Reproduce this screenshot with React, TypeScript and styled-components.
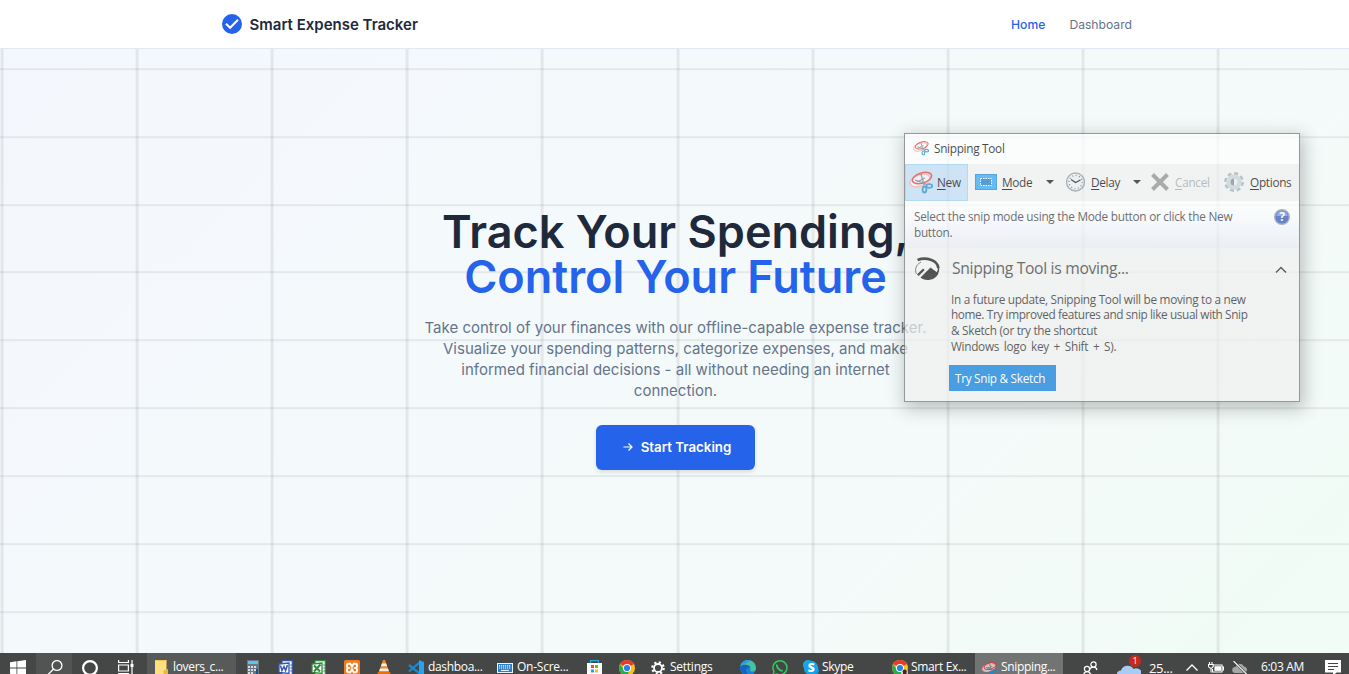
import React from "react";
import styled, { createGlobalStyle } from "styled-components";

const Global = createGlobalStyle`
  * { box-sizing: border-box; }
  html, body { margin: 0; padding: 0; }
  body { font-family: Inter, sans-serif; overflow: hidden; }
  h1, p { margin: 0; }
  svg { display: block; flex: none; }
`;

const Screen = styled.div`
  position: relative;
  display: flex;
  flex-direction: column;
  width: 1349px;
  height: 674px;
  overflow: hidden;
`;

const Page = styled.div`
  flex: 1;
  min-height: 0;
  display: flex;
  flex-direction: column;
  background:
    repeating-linear-gradient(90deg, rgba(110, 110, 120, 0.13) 0 3px, transparent 3px 135.1px) 0.6px 0,
    repeating-linear-gradient(180deg, rgba(110, 110, 120, 0.12) 0 2px, transparent 2px 67.87px) 0 0.2px,
    linear-gradient(135deg, #f4f7fd 0%, #f4f9fc 30%, #f4fafa 65%, #f2fbf7 88%, #f0fcf5 100%);
`;

const Header = styled.header`
  height: 49px;
  flex: none;
  display: flex;
  align-items: center;
  justify-content: space-between;
  padding: 0 217px 0 222px;
  background: rgba(255, 255, 255, 0.97);
  border-bottom: 1px solid #e2e8f0;
`;

const Brand = styled.div`
  display: flex;
  align-items: center;
  gap: 7.5px;
  color: #1e293b;
  font-size: 15px;
  font-weight: 600;
  white-space: nowrap;
`;

const Nav = styled.nav`
  display: flex;
  gap: 24px;
  font-size: 12.15px;
`;

const NavLink = styled.span<{ $active?: boolean }>`
  color: ${(p) => (p.$active ? "#2563eb" : "#64748b")};
  font-weight: ${(p) => (p.$active ? 500 : 400)};
`;

const Hero = styled.main`
  flex: 1;
  display: flex;
  flex-direction: column;
  align-items: center;
  padding: 160px 0 0 2px;
  text-align: center;
`;

const Headline = styled.h1`
  font-size: 45px;
  line-height: 45px;
  font-weight: 600;
  color: #1e293b;
  white-space: nowrap;
`;

const Accent = styled.span`
  display: block;
  color: #2563eb;
`;

const Lead = styled.p`
  margin-top: 18px;
  font-size: 15px;
  line-height: 21px;
  color: #64748b;
  white-space: nowrap;
`;

const CallToAction = styled.button`
  margin-top: 24px;
  width: 159px;
  height: 45px;
  border: 0;
  border-radius: 6px;
  display: flex;
  align-items: center;
  justify-content: center;
  gap: 8px;
  padding: 0 0 1px 3px;
  background: #2563eb;
  color: #fff;
  font: 600 13.3px Inter, sans-serif;
  box-shadow: 0 2px 4px rgba(0, 0, 0, 0.12);
  white-space: nowrap;
`;

/* Snipping Tool window */

const Window = styled.section`
  position: absolute;
  left: 904px;
  top: 132.5px;
  width: 396px;
  height: 269.5px;
  display: flex;
  flex-direction: column;
  border: 1px solid #6b7170;
  background: #f0f0f0;
  opacity: 0.7;
  box-shadow: 2px 5px 16px 2px rgba(0, 0, 0, 0.33);
  color: #000;
  font-family: "Open Sans", sans-serif;
  font-size: 11.8px;
  letter-spacing: -0.3px;
  white-space: nowrap;
`;

const TitleBar = styled.div`
  height: 30px;
  flex: none;
  display: flex;
  align-items: center;
  gap: 5px;
  padding: 0 0 2px 8px;
  background: #fff;
`;

const ToolBar = styled.div`
  height: 37px;
  flex: none;
  display: flex;
  align-items: center;
`;

const Tool = styled.div<{ $width: number; $gap?: number; $active?: boolean; $disabled?: boolean }>`
  width: ${(p) => p.$width}px;
  height: 37px;
  display: flex;
  align-items: center;
  gap: ${(p) => p.$gap ?? 4}px;
  padding-left: 4px;
  color: ${(p) => (p.$disabled ? "#a0a0a0" : "#000")};
  background: ${(p) => (p.$active ? "#bfdcf3" : "transparent")};
  box-shadow: ${(p) => (p.$active ? "inset 0 0 0 1px #9accf3" : "none")};
  u { text-underline-offset: 2px; }
`;

const Caret = styled.i`
  margin-left: auto;
  margin-right: 5px;
  border: 4px solid transparent;
  border-top-color: #111;
  border-bottom-width: 0;
`;

const Hint = styled.div`
  height: 47px;
  flex: none;
  display: flex;
  justify-content: space-between;
  align-items: flex-start;
  padding: 8.5px 9px 0 9px;
  line-height: 15.5px;
  color: #333;
  background: linear-gradient(#fff 10%, #f9f9fd 40%, #e7e9f2);
`;

const Notice = styled.div`
  flex: 1;
  display: flex;
  padding: 9.500px 11px 0 9px;
`;

const NoticeBody = styled.div`
  flex: 1;
  display: flex;
  flex-direction: column;
  align-items: flex-start;
  padding-left: 11px;
`;

const NoticeTitle = styled.div`
  font-size: 15.7px;
  line-height: 22px;
  letter-spacing: -0.32px;
  color: #333;
  padding-left: 1px;
`;

const NoticeText = styled.p`
  margin-top: 12.5px;
  line-height: 15.8px;
  color: #222;
`;

const TextLine = styled.span<{ $spacing?: number; $word?: number }>`
  display: block;
  letter-spacing: ${(p) => p.$spacing ?? -0.3}px;
  word-spacing: ${(p) => p.$word ?? 0}px;
`;

const TryButton = styled.div`
  margin: 10.500px 0 0 -2px;
  width: 107px;
  height: 26px;
  display: flex;
  align-items: center;
  padding: 0 0 1px 6px;
  background: #0078d7;
  color: #fff;
`;

/* Taskbar */

const TaskBar = styled.footer`
  height: 21px;
  flex: none;
  overflow: hidden;
  background: #454746;
  color: #fff;
  font-family: "Open Sans", sans-serif;
  font-size: 12px;
`;

const TaskRow = styled.div`
  height: 30px;
  display: flex;
`;

const Task = styled.div<{ $width: number; $pad?: number; $gap?: number; $bg?: string; $spacing?: number }>`
  width: ${(p) => p.$width}px;
  height: 30px;
  flex: none;
  display: flex;
  align-items: center;
  gap: ${(p) => p.$gap ?? 4}px;
  padding-left: ${(p) => p.$pad ?? 0}px;
  background: ${(p) => p.$bg ?? "transparent"};
  letter-spacing: ${(p) => p.$spacing ?? -0.33}px;
  white-space: nowrap;
`;

const Label = styled.span`
  line-height: 16px;
  padding-bottom: 2px;
`;

const Weather = styled.div`
  position: relative;
  padding-top: 9px;
`;

const Badge = styled.span`
  position: absolute;
  left: 12px;
  top: -1px;
  width: 12px;
  height: 12px;
  border-radius: 50%;
  background: #c42b1c;
  font-size: 9px;
  line-height: 12px;
  text-align: center;
`;

const Temperature = styled.span`
  line-height: 16px;
  font-size: 13px;
`;

const SnipIcon = ({ size }: { size: number }) => (
  <svg width={size} height={size} viewBox="0 0 24 24" fill="none">
    <ellipse cx="11" cy="10.500" rx="10.500" ry="5.600" transform="rotate(-20 11 10.500)" stroke="#f3a9a9" strokeWidth="1.600" fill="#fff" fillOpacity=".6" />
    <ellipse cx="13" cy="8" rx="10" ry="5" transform="rotate(-18 13 8)" stroke="#e0393e" strokeWidth="1.500" />
    <path d="M12 4l3 11M6 10l11 4M8 12l8-4" stroke="#777" strokeWidth="1.300" />
    <ellipse cx="15.500" cy="19.500" rx="1.900" ry="3" stroke="#1e88c9" strokeWidth="1.800" />
    <ellipse cx="20.300" cy="16" rx="3" ry="1.900" stroke="#1e88c9" strokeWidth="1.800" />
  </svg>
);

const ChromeIcon = ({ profile }: { profile?: boolean }) => (
  <svg width="16" height="16" viewBox="0 0 16 16">
    <circle cx="8" cy="8" r="8" fill="#fbc116" />
    <path d="M8 8L1.100 4A8 8 0 0 1 14.900 4Z" fill="#e33b2e" />
    <path d="M1.100 4A8 8 0 0 0 8 16L11 9.800 5 10Z" fill="#2da94f" />
    <circle cx="8" cy="8" r="4" fill="#fff" />
    <circle cx="8" cy="8" r="3.100" fill="#2f7de9" />
    {profile && <circle cx="12.500" cy="12.500" r="3.500" fill="#d9cfc8" />}
    {profile && <path d="M11 16v-3.500a2 2 0 1 1 3.500 0V16z" fill="#4b1f1a" />}
  </svg>
);

const DocIcon = ({ color, children }: { color: string; children: React.ReactNode }) => (
  <svg width="16" height="16" viewBox="0 0 16 16" fill="none">
    <path d="M4 .7h10.300v14.600H4z" fill="#f5f8ff" stroke={color} strokeWidth="1.200" />
    <path d="M12.300 5h1.500M12.300 8h1.500M12.300 11h1.500" stroke={color} />
    <path d="M1 4l10-1v10.500L1 12.500z" fill="#fff" stroke={color} strokeWidth="1.300" />
    {children}
  </svg>
);

function SnippingTool() {
  return (
    <Window>
      <TitleBar>
        <SnipIcon size={16} />
        <span>Snipping Tool</span>
      </TitleBar>
      <ToolBar>
        <Tool $width={63} $active $gap={4}>
          <SnipIcon size={24} />
          <span><u>N</u>ew</span>
        </Tool>
        <Tool $width={91} $gap={4}>
          <svg width="26" height="16" viewBox="0 0 26 16">
            <path d="M3 0h22v16H3z" fill="#1783cc" />
            <path d="M4 1h20v14H4z" fill="#29a3f2" />
            <path d="M8.500 4.500h11v7h-11z" fill="#1677c4" stroke="#fff" strokeDasharray="1.500 1" />
          </svg>
          <span><u>M</u>ode</span>
          <Caret />
        </Tool>
        <Tool $width={87} $gap={6}>
          <svg width="22" height="20" viewBox="0 0 22 20" fill="none">
            <circle cx="12.500" cy="10" r="9" fill="#e9edef" stroke="#8b969c" strokeWidth="1.400" />
            <circle cx="12.500" cy="10" r="6.600" stroke="#59666d" strokeWidth="1.300" strokeDasharray="1 2.450" />
            <path d="M8 7.500L12.500 10.500 17.500 8" stroke="#111" strokeWidth="1.300" />
          </svg>
          <span><u>D</u>elay</span>
          <Caret />
        </Tool>
        <Tool $width={74} $gap={5}  $disabled>
          <svg width="20" height="20" viewBox="0 0 20 20">
            <path d="M2.500 2.500l15 15M17.500 2.500L2.500 17.500" stroke="#8a8a8a" strokeWidth="4" />
          </svg>
          <span><u>C</u>ancel</span>
        </Tool>
        <Tool $width={79} $gap={5}>
          <svg width="21" height="24" viewBox="0 0 21 24" fill="none">
            <circle cx="10" cy="12" r="8.400" stroke="#9aa9b2" strokeWidth="3" strokeDasharray="3.800 2.800" />
            <circle cx="10" cy="12" r="5.600" fill="#e8eef1" stroke="#c3cfd6" strokeWidth="4.500" />
            <path d="M10 8.500a3.500 3.500 0 0 0 0 7z" fill="#76848c" />
          </svg>
          <span><u>O</u>ptions</span>
        </Tool>
      </ToolBar>
      <Hint>
        <span>
          <TextLine $spacing={-0.26}>Select the snip mode using the Mode button or click the New</TextLine>
          <TextLine>button.</TextLine>
        </span>
        <svg width="16" height="16" viewBox="0 0 16 16">
          <circle cx="8" cy="8" r="7.300" fill="#2a50b8" stroke="#8795ac" strokeWidth="1.400" />
          <path d="M2.200 7a5.900 5.900 0 0 1 11.600 0z" fill="#6d8fdc" />
          <text x="8" y="12.200" textAnchor="middle" fontSize="11.500" fontWeight="700" fill="#fff">?</text>
        </svg>
      </Hint>
      <Notice>
        <svg width="26" height="24" viewBox="0 0 26 24" fill="none">
          <path d="M3.500 3C12-.3 23.500 3 24.300 11" stroke="#111" strokeWidth="2.600" />
          <path d="M24.600 10c.4 5-2.500 9-7 11" stroke="#111" strokeWidth="1.400" />
          <path d="M7 5C1.500 8 .5 13 2.500 17" stroke="#555" strokeWidth="1" />
          <path d="M6.500 20.500L16.500 10.500 24.500 16.500C22 21 18 23 13.500 23 10.500 23 8 22 6.500 20.500z" fill="#111" />
          <path d="M3 17.500L9 11.500 10.700 13 4.700 19z" fill="#111" />
        </svg>
        <NoticeBody>
          <NoticeTitle>Snipping Tool is moving...</NoticeTitle>
          <NoticeText>
            <TextLine $spacing={-0.3}>In a future update, Snipping Tool will be moving to a new</TextLine>
            <TextLine $spacing={-0.38}>home. Try improved features and snip like usual with Snip</TextLine>
            <TextLine>&amp; Sketch (or try the shortcut</TextLine>
            <TextLine $word={2}>Windows logo key + Shift + S).</TextLine>
          </NoticeText>
          <TryButton>Try Snip &amp; Sketch</TryButton>
        </NoticeBody>
        <svg width="14" height="24" viewBox="0 0 14 24" fill="none">
          <path d="M2 15.500l5-5 5 5" stroke="#222" strokeWidth="1.500" />
        </svg>
      </Notice>
    </Window>
  );
}

function DesktopTaskBar() {
  return (
    <TaskBar>
      <TaskRow>
        <Task $width={36} $pad={10}>
          <svg width="16" height="16" viewBox="0 0 16 16" fill="#fff">
            <path d="M0 2.200L6.500 1.300V7.500H0zM7.300 1.200L16 0V7.500H7.300zM0 8.500H6.500V14.700L0 13.800zM7.300 8.500H16V16L7.300 14.800z" />
          </svg>
        </Task>
        <Task $width={36} $pad={11} $bg="#515453">
          <svg width="16" height="16" viewBox="0 0 16 16" fill="none" stroke="#fff" strokeWidth="1.300">
            <circle cx="10" cy="5.500" r="4.900" />
            <path d="M6.500 9L.7 15" />
          </svg>
        </Task>
        <Task $width={36} $pad={10}>
          <svg width="16" height="16" viewBox="0 0 16 16" fill="none">
            <circle cx="8" cy="8" r="6.900" stroke="#fff" strokeWidth="2.200" />
          </svg>
        </Task>
        <Task $width={39} $pad={10}>
          <svg width="16" height="16" viewBox="0 0 16 16" fill="none" stroke="#fff" strokeWidth="1.200">
            <path d="M.6 0v2.500h9.800V0M.6 5h9.800v6H.6zM.6 16v-2.500h9.800V16M14 0v16" />
            <path d="M12.500 4h3v3h-3z" fill="#fff" stroke="none" />
          </svg>
        </Task>
        <Task $width={89} $pad={8} $gap={5} $bg="#575a59">
          <svg width="13" height="16" viewBox="0 0 13 16">
            <path d="M0 0h11.500v16H0z" fill="#ffdf7e" />
            <path d="M8.500 10.500L13 9v7H8.500z" fill="#e8b93c" />
            <path d="M0 0h11.500v1H0z" fill="#f0c651" />
          </svg>
          <Label>lovers_c...</Label>
        </Task>
        <Task $width={42} $pad={11}>
          <svg width="12" height="16" viewBox="0 0 12 16">
            <path d="M0 0h12v16H0z" fill="#6c7780" />
            <path d="M1 1h10v3H1z" fill="#5cc4ee" />
            <path d="M1 6h2v2H1zM4 6h2v2H4zM7 6h2v2H7zM1 9h2v2H1zM4 9h2v2H4zM7 9h2v2H7zM1 12h2v2H1zM4 12h2v2H4z" fill="#d8dde0" />
            <path d="M9 9h2v5H9z" fill="#18528f" />
          </svg>
        </Task>
        <Task $width={33}>
          <DocIcon color="#3558a8">
            <path d="M2.500 5.500L4 10.500 6 6.500 7.600 10.500 9.500 5" stroke="#3558a8" strokeWidth="1.500" />
          </DocIcon>
        </Task>
        <Task $width={33}>
          <DocIcon color="#2d8a37">
            <path d="M3 5.500L9 11.500M9.500 4.500L3 11.500" stroke="#2d8a37" strokeWidth="2" />
          </DocIcon>
        </Task>
        <Task $width={33}>
          <svg width="16" height="16" viewBox="0 0 16 16" fill="none">
            <rect width="16" height="16" rx="1.500" fill="#f47a20" />
            <path d="M4.300 3.800h2l1.700 2.700 1.700-2.700h2q1.300 0 1.300 1.400v1.200q0 1.100-1.500 1.600 1.500.5 1.500 1.600v1.200q0 1.400-1.300 1.400h-2L8 9.500l-1.700 2.700h-2Q3 12.200 3 10.800V9.600Q3 8.500 4.500 8 3 7.500 3 6.400V5.200q0-1.400 1.300-1.400z" stroke="#fff" strokeWidth="1.900" />
          </svg>
        </Task>
        <Task $width={31}>
          <svg width="14" height="16" viewBox="0 0 14 16">
            <path d="M6 0h2l4.500 13h-11z" fill="#f58a1f" />
            <path d="M4.900 3.500h4.200l1 2.700H4zM3.100 8.500h7.800l1 2.500H2.200z" fill="#f2f2f2" />
            <path d="M1 12h12l1 4H0z" fill="#e8700c" />
          </svg>
        </Task>
        <Task $width={89}>
          <svg width="16" height="16" viewBox="0 0 16 16" fill="none">
            <path d="M11.500 2.500L1 11.500M11.500 13.500L1 5" stroke="#168bd2" strokeWidth="2.300" />
            <path d="M11 0l5 2v12l-5 2z" fill="#27a2ee" />
          </svg>
          <Label>dashboa...</Label>
        </Task>
        <Task $width={90} $spacing={-0.25}>
          <svg width="16" height="10" viewBox="0 0 16 10">
            <path d="M0 0h16v10H0z" fill="#e7f2fb" />
            <path d="M1 1h14v8H1z" fill="#2e7fcb" />
            <path d="M2 2.800h12M2 5h12" stroke="#fff" strokeWidth="1.200" strokeDasharray="1.200 .8" />
            <path d="M4 7.400h8" stroke="#fff" />
          </svg>
          <Label>On-Scre...</Label>
        </Task>
        <Task $width={32}>
          <svg width="15" height="16" viewBox="0 0 15 16">
            <path d="M3.500 3V.7h8V3" fill="none" stroke="#2aa7e0" strokeWidth="1.200" />
            <path d="M0 3h15v13H0z" fill="#fff" />
            <path d="M4 5h3v3H4z" fill="#f04e23" />
            <path d="M8 5h3v3H8z" fill="#7db900" />
            <path d="M4 9.500h3v3H4z" fill="#1e9fe6" />
            <path d="M8 9.500h3v3H8z" fill="#fcb813" />
          </svg>
        </Task>
        <Task $width={32}><ChromeIcon /></Task>
        <Task $width={89} $gap={5} $spacing={-0.25}>
          <svg width="14" height="14" viewBox="0 0 14 14" fill="none" stroke="#fff">
            <circle cx="7" cy="7" r="4" strokeWidth="1.800" />
            <circle cx="7" cy="7" r="5.700" strokeWidth="2.200" strokeDasharray="2.150 2.330" />
          </svg>
          <Label>Settings</Label>
        </Task>
        <Task $width={32}>
          <svg width="16" height="16" viewBox="0 0 16 16">
            <circle cx="8" cy="8" r="8" fill="#1b83d3" />
            <path d="M.3 6A8 8 0 0 1 16 8c0 3-2.500 4-4.500 3.500-2-.5-1-1.500-1-2.500C10.500 5 4 3.500.3 6z" fill="#43c3a2" />
            <path d="M.3 6A8 8 0 0 1 10 .3C8 3 5 3.500.3 6z" fill="#2a9fe0" />
            <path d="M.2 7C3 3.500 9.500 4.500 10.500 8 8 6.500 5.500 8.500 6.500 12L8 15.500A8 8 0 0 1 .2 7z" fill="#1665bd" />
          </svg>
        </Task>
        <Task $width={31}>
          <svg width="16" height="16" viewBox="0 0 16 16" fill="none" stroke="#2fc85f">
            <path d="M1 15l1-3.600A7 7 0 1 1 4.800 14z" strokeWidth="1.500" />
            <path d="M5.300 4.700c-.8 1-.3 2.400 1 3.900s3 2.500 4.300 1.800" strokeWidth="1.900" />
          </svg>
        </Task>
        <Task $width={89} $gap={3}>
          <svg width="16" height="16" viewBox="0 0 16 16">
            <circle cx="5" cy="5" r="5" fill="#20a8ea" />
            <circle cx="11" cy="11" r="5" fill="#118fd6" />
            <circle cx="8" cy="8" r="7.200" fill="#18a4eb" />
            <text x="8" y="12.300" textAnchor="middle" fontSize="12" fontWeight="800" fill="#fff">S</text>
          </svg>
          <Label>Skype</Label>
        </Task>
        <Task $width={83} $gap={3}><ChromeIcon profile /><Label>Smart Ex...</Label></Task>
        <Task $width={88} $pad={7} $bg="#727473"><SnipIcon size={15} /><Label>Snipping...</Label></Task>
        <Task $width={54} $pad={20}>
          <svg width="15" height="15" viewBox="0 0 15 15" fill="none" stroke="#fff" strokeWidth="1.200">
            <circle cx="10.500" cy="3.500" r="2.600" />
            <path d="M7 8.500c.5-3 6-3.500 7 .5" />
            <circle cx="4" cy="8" r="2.600" />
            <path d="M.6 14c.5-4.500 6.500-4.500 7 0" />
          </svg>
        </Task>
        <Task $width={69} $gap={8}>
          <Weather>
            <svg width="24" height="15" viewBox="0 0 24 15">
              <path d="M4 15A4.500 4.500 0 0 1 4 5.500 7 7 0 0 1 16.500 4a5.500 5.500 0 0 1 5.500 11z" fill="#a9cbf5" />
            </svg>
            <Badge>1</Badge>
          </Weather>
          <Temperature>25...</Temperature>
        </Task>
        <Task $width={22}>
          <svg width="12" height="10" viewBox="0 0 12 10" fill="none"><path d="M.5 7.500L6 2l5.500 5.500" stroke="#fff" strokeWidth="1.300" /></svg>
        </Task>
        <Task $width={24}>
          <svg width="16" height="13" viewBox="0 0 16 13" fill="none" stroke="#fff" strokeWidth="1.100">
            <path d="M5.500 3H14v7H4.500V7M14.500 5h1v3h-1" />
            <path d="M7 4.800h5.500v3.500H7z" fill="#fff" />
            <path d="M1.500 0v2.500M4 0v2.500M.5 2.500h4.700v2L4 6H1.800L.5 4.500zM3 6v4.500" />
          </svg>
        </Task>
        <Task $width={29}>
          <svg width="16" height="14" viewBox="0 0 16 14" fill="none">
            <path d="M3 12a3 3 0 0 1 .5-6A4.500 4.500 0 0 1 12 5.500 3.400 3.400 0 0 1 13 12z" fill="#a5a7a6" />
            <path d="M1.500 0L15 13.500" stroke="#454746" strokeWidth="2.400" />
            <path d="M1.500 0L15 13.500" stroke="#fff" strokeWidth="1.100" />
          </svg>
        </Task>
        <Task $width={64}><Label>6:03 AM</Label></Task>
        <Task $width={20}>
          <svg width="16" height="16" viewBox="0 0 16 16">
            <path d="M0 0h16v12.500h-4.500L8 16V12.500H0z" fill="#fff" />
            <path d="M3 3.500h10M3 6.500h10M3 9.500h6" stroke="#454746" strokeWidth="1.200" />
          </svg>
        </Task>
      </TaskRow>
    </TaskBar>
  );
}

export default function App() {
  return (
    <Screen>
      <Global />
      <Page>
        <Header>
          <Brand>
            <svg width="20" height="20" viewBox="0 0 20 20" fill="none">
              <circle cx="10" cy="10" r="10" fill="#2563eb" />
              <path d="M4 9.800L8.100 13.800 16 5.800" stroke="#fff" strokeWidth="2" />
            </svg>
            <span>Smart Expense Tracker</span>
          </Brand>
          <Nav>
            <NavLink $active>Home</NavLink>
            <NavLink>Dashboard</NavLink>
          </Nav>
        </Header>
        <Hero>
          <Headline>
            Track Your Spending,
            <Accent>Control Your Future</Accent>
          </Headline>
          <Lead>
            Take control of your finances with our offline-capable expense tracker.
            <br />
            Visualize your spending patterns, categorize expenses, and make
            <br />
            informed financial decisions - all without needing an internet
            <br />
            connection.
          </Lead>
          <CallToAction>
            <svg width="10" height="10" viewBox="0 0 10 10" fill="none" stroke="#fff" strokeWidth="1.200">
              <path d="M.5 5h8.500M5.500 1.500L9 5 5.500 8.500" />
            </svg>
            <span>Start Tracking</span>
          </CallToAction>
        </Hero>
      </Page>
      <DesktopTaskBar />
      <SnippingTool />
    </Screen>
  );
}
